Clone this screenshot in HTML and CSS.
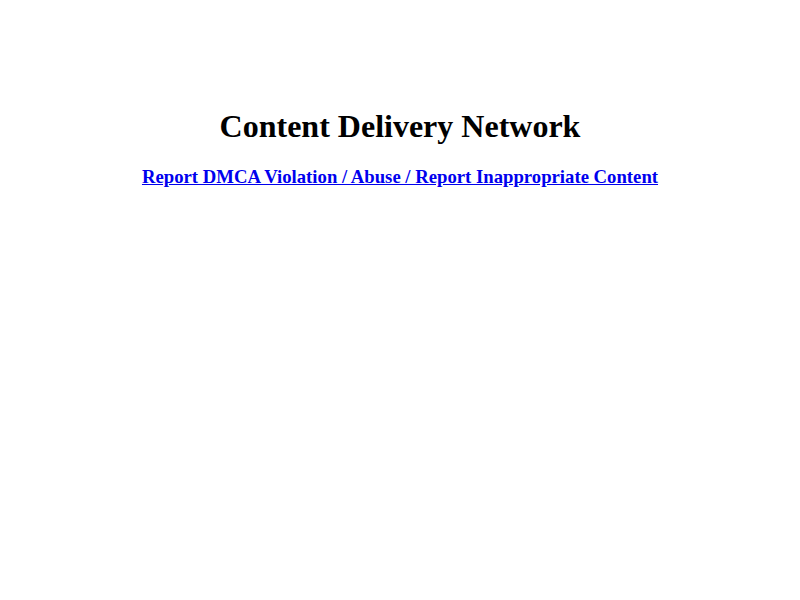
FILE: index.html
```html
<!DOCTYPE html>
<html>
<head>
<meta charset="utf-8">
<title>Content Delivery Network</title>
<link rel="stylesheet" href="styles.css">
</head>
<body>
<div class="wrap">
<h1 class="title">Content Delivery Network</h1>
<h3 class="report"><a href="#">Report DMCA Violation / Abuse / Report Inappropriate Content</a></h3>
</div>
</body>
</html>
```
FILE: styles.css
```css
body {
  margin: 8px;
  background: #fff;
  font-family: "Liberation Serif", "Times New Roman", serif;
  color: #000;
}
.wrap {
  padding-top: 79px;
  text-align: center;
}
.title {
  font-size: 32px;
  font-weight: bold;
  margin: 21px 0;
}
.report {
  font-size: 18.72px;
  font-weight: bold;
  margin: 18px 0;
}
.report a {
  color: #0000ee;
  text-decoration: underline;
}
```
